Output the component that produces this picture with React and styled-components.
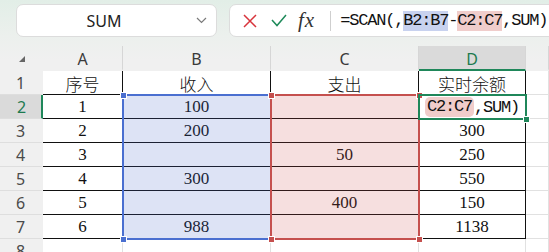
import React from 'react';
import styled, { createGlobalStyle } from 'styled-components';

const GREEN = '#1f875a';
const BLUE = '#4a6fd0';
const RED = '#c5504e';

const Global = createGlobalStyle`
  html, body { margin: 0; padding: 0; background: #fff; overflow: hidden; }
  * { box-sizing: border-box; }
`;

const Page = styled.div`
  width: 549px;
  height: 252px;
  overflow: hidden;
  background: linear-gradient(180deg, #e2eee7 0px, #ecf0ed 36px, #f0f0f0 60px);
  font-family: "Noto Sans", "Liberation Sans", sans-serif;
`;

const Toolbar = styled.div`
  display: flex;
  align-items: flex-start;
  gap: 12px;
  height: 46px;
  padding: 4px 0 0 16px;
`;

const NameBox = styled.div`
  width: 201px;
  height: 33px;
  flex: none;
  display: flex;
  align-items: center;
  background: #fff;
  border: 1px solid #dcdcdc;
  border-radius: 7px;
`;

const NameText = styled.div`
  flex: 1;
  text-align: center;
  font-size: 16px;
  color: #222;
  padding-top: 1px;
`;

const Chevron = styled.div`
  width: 25px;
  display: flex;
  align-items: center;
  justify-content: flex-start;
  padding-left: 5px;
`;

const FormulaBox = styled.div`
  flex: 1;
  height: 33px;
  margin-right: -14px;
  display: flex;
  align-items: center;
  background: #fff;
  border: 1px solid #dcdcdc;
  border-radius: 7px;
  padding-left: 13px;
`;

const Icon = styled.span`
  display: flex;
  align-items: center;
  margin-left: ${(p) => p.$ml || 0}px;
`;

const Fx = styled.span`
  margin-left: 11px;
  font-family: "Liberation Serif", serif;
  font-style: italic;
  font-size: 21px;
  color: #333;
  line-height: 1;
  letter-spacing: 1px;
`;

const Divider = styled.span`
  width: 1px;
  height: 20px;
  background: #cfcfcf;
  margin-left: 15px;
`;

const Formula = styled.div`
  margin-left: 9px;
  font-family: "Liberation Mono", monospace;
  font-size: 17px;
  letter-spacing: -1.2px;
  color: #111;
  white-space: nowrap;
  line-height: 20px;
`;

const Ref = styled.span`
  display: inline-block;
  line-height: 20px;
  background: ${(p) => (p.$tone === 'blue' ? '#c8d2ef' : '#f0cdcb')};
  border-radius: ${(p) => (p.$round ? '5px' : '0')};
  padding: ${(p) => (p.$round ? '0 2px' : '0')};
`;

const Sheet = styled.div`
  display: grid;
  grid-template-columns: 43px 80px 148px 148px 107px 1fr;
  grid-template-rows: 25px repeat(8, 24px);
`;

const Corner = styled.div`
  grid-row: 1;
  grid-column: 1;
  display: flex;
  align-items: center;
  justify-content: center;
  padding-top: 1px;
`;

const ColHead = styled.div`
  grid-row: 1;
  grid-column: ${(p) => p.$col};
  display: flex;
  align-items: center;
  justify-content: center;
  font-size: 16px;
  color: ${(p) => (p.$active ? '#1d7a50' : '#3a3a3a')};
  background: ${(p) => (p.$active ? '#dadada' : 'transparent')};
  border-right: 1px solid #d6d6d6;
  border-bottom: 2px solid ${(p) => (p.$active ? GREEN : 'transparent')};
  padding-top: 2px;
`;

const RowHead = styled.div`
  grid-row: ${(p) => p.$row};
  grid-column: 1;
  display: flex;
  align-items: center;
  justify-content: center;
  font-size: 16px;
  color: ${(p) => (p.$active ? '#1d7a50' : '#4a4a4a')};
  background: ${(p) => (p.$active ? '#dadada' : 'transparent')};
  border-bottom: 1px solid #dedede;
  border-right: 2px solid ${(p) => (p.$active ? GREEN : 'transparent')};
  padding-left: ${(p) => (p.$active ? '2px' : '0')};
`;

const Cell = styled.div`
  grid-row: ${(p) => p.$row};
  grid-column: ${(p) => p.$col};
  display: flex;
  align-items: center;
  justify-content: center;
  background: #fff;
  border-right: 1px solid ${(p) => (p.$table ? '#111' : '#e1e1e1')};
  border-bottom: 1px solid ${(p) => (p.$table ? '#111' : '#e1e1e1')};
  font-family: "Liberation Serif", "Noto Sans CJK SC", serif;
  font-weight: 300;
  font-size: 17px;
  color: #111;
  padding-top: 1px;
`;

const EditCell = styled(Cell)`
  justify-content: flex-start;
  overflow: hidden;
  white-space: nowrap;
  padding-left: 6px;
  font-family: "Liberation Mono", monospace;
  font-weight: 400;
  letter-spacing: -1.2px;
`;

const Range = styled.div`
  grid-row: ${(p) => p.$rows};
  grid-column: ${(p) => p.$col};
  position: relative;
  margin: -1px;
  border: 2px solid ${(p) => p.$color};
  background: ${(p) => p.$fill};
  pointer-events: none;
`;

const Handle = styled.span`
  position: absolute;
  width: 7px;
  height: 7px;
  background: ${(p) => p.$color};
  border: 1px solid #fff;
  ${(p) => (p.$top ? 'top: -4.5px;' : 'bottom: -4.5px;')}
  ${(p) => (p.$left ? 'left: -4.5px;' : 'right: -4.5px;')}
`;

const rows = [
  ['序号', '收入', '支出', '实时余额'],
  ['1', '100', '', null],
  ['2', '200', '', '300'],
  ['3', '', '50', '250'],
  ['4', '300', '', '550'],
  ['5', '', '400', '150'],
  ['6', '988', '', '1138'],
];

const Handles = ({ color, corners }) =>
  corners.map(([t, l]) => <Handle key={`${t}${l}`} $color={color} $top={t} $left={l} />);

export default function App() {
  const all = [
    [true, true],
    [true, false],
    [false, true],
    [false, false],
  ];
  return (
    <>
      <Global />
      <Page>
        <Toolbar>
          <NameBox>
            <NameText>SUM</NameText>
            <Chevron>
              <svg width="11" height="7" viewBox="0 0 11 7">
                <polyline points="1,1 5.5,5.5 10,1" fill="none" stroke="#7a7a7a" strokeWidth="1.2" />
              </svg>
            </Chevron>
          </NameBox>
          <FormulaBox>
            <Icon>
              <svg width="14" height="14" viewBox="0 0 14 14">
                <path d="M1 1 L13 13 M13 1 L1 13" stroke="#d8343c" strokeWidth="1.5" fill="none" />
              </svg>
            </Icon>
            <Icon $ml={14}>
              <svg width="16" height="13" viewBox="0 0 16 13">
                <polyline points="1,6 6,11.5 15,1" fill="none" stroke="#1e8a5a" strokeWidth="1.5" />
              </svg>
            </Icon>
            <Fx>fx</Fx>
            <Divider />
            <Formula>
              =SCAN(,<Ref $tone="blue">B2:B7</Ref>-<Ref $tone="red">C2:C7</Ref>,SUM)
            </Formula>
          </FormulaBox>
        </Toolbar>
        <Sheet>
          <Corner>
            <svg width="8" height="8" viewBox="0 0 8 8">
              <polygon points="7,1 7,7 1,7" fill="#666" />
            </svg>
          </Corner>
          {['A', 'B', 'C', 'D', ''].map((h, i) => (
            <ColHead key={i} $col={i + 2} $active={h === 'D'}>
              {h}
            </ColHead>
          ))}
          {[1, 2, 3, 4, 5, 6, 7, 8].map((n) => (
            <RowHead key={n} $row={n + 1} $active={n === 2}>
              {n}
            </RowHead>
          ))}
          {rows.map((r, ri) =>
            r.map((v, ci) =>
              v === null ? (
                <EditCell key={`${ri}-${ci}`} $row={ri + 2} $col={ci + 2} $table>
                  <Ref $tone="red" $round>C2:C7</Ref>,SUM)
                </EditCell>
              ) : (
                <Cell key={`${ri}-${ci}`} $row={ri + 2} $col={ci + 2} $table>
                  {v}
                </Cell>
              )
            )
          )}
          {rows.map((_, ri) => (
            <Cell key={`e${ri}`} $row={ri + 2} $col={6} />
          ))}
          {[2, 3, 4, 5, 6].map((c) => (
            <Cell key={`r8${c}`} $row={9} $col={c} />
          ))}
          <Range $rows="3 / 9" $col="3" $color={BLUE} $fill="rgba(75,105,200,0.19)">
            <Handles color={BLUE} corners={all} />
          </Range>
          <Range $rows="3 / 9" $col="4" $color={RED} $fill="rgba(205,80,80,0.18)">
            <Handles color={RED} corners={all} />
          </Range>
          <Range $rows="3 / 4" $col="5" $color={GREEN} $fill="transparent">
            <Handles color={GREEN} corners={[[false, false]]} />
          </Range>
        </Sheet>
      </Page>
    </>
  );
}
